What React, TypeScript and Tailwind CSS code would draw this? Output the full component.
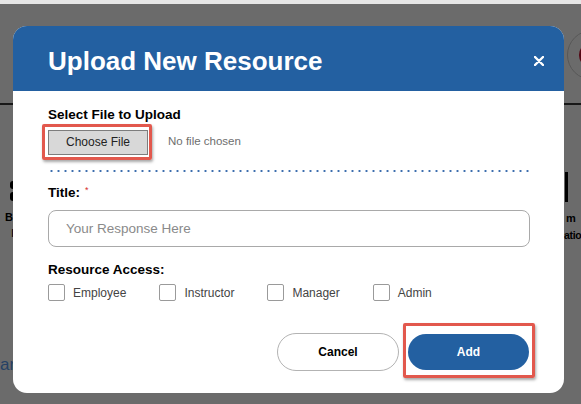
import React, { useState } from 'react';

const roles = ['Employee', 'Instructor', 'Manager', 'Admin'];

function Highlight({ className }: { className: string }) {
  // red annotation frame drawn over a control
  return (
    <span
      className={`pointer-events-none absolute rounded-[2px] border-[3px] border-[#e2584d] shadow-[1px_2px_3px_rgba(0,0,0,0.35)] ${className}`}
    />
  );
}

function BackgroundPage() {
  // only the slivers of the page that show round the modal
  return (
    <>
      <div className="flex h-[101px] justify-end border-b-2 border-[#3b3b3b] pt-[26px]">
        <div className="mr-[-36px] flex h-[50px] w-[50px] items-center justify-center rounded-full border border-[#cfcfcf] bg-white">
          <span className="h-[26px] w-[26px] rounded-full bg-[#c8102e]" />
        </div>
      </div>
      <div className="flex justify-between">
        <div className="flex w-[13px] flex-col">
          <svg className="ml-[10px] mt-[76px] shrink-0" width="3" height="20" viewBox="0 0 3 20">
            <rect x="0" y="0" width="6" height="8" rx="3" fill="#000" />
            <rect x="0" y="11" width="6" height="9" rx="3" fill="#000" />
          </svg>
          <span className="ml-[5px] mt-[9px] text-[11px] leading-[14px] font-bold text-black">B</span>
          <span className="ml-[11px] mt-[2px] text-[11px] leading-[14px] text-black">I</span>
          <span className="mt-[114px] text-[17px] leading-[22px] text-[#5b9bf0]">ar</span>
        </div>
        <div className="flex w-[17px] flex-col">
          <div className="ml-[1px] mt-[67px] h-[30px] w-[3px] shrink-0 bg-black" />
          <span className="ml-[2px] mt-[9px] text-[11px] leading-[14px] font-bold text-black">m</span>
          <span className="mt-[3px] text-[10.5px] leading-[14px] font-bold tracking-[-0.3px] text-black">atio</span>
        </div>
      </div>
    </>
  );
}

export default function App() {
  const [access, setAccess] = useState<string[]>([]);
  const [title, setTitle] = useState('');

  const toggle = (role: string) =>
    setAccess(prev => (prev.includes(role) ? prev.filter(r => r !== role) : [...prev, role]));

  return (
    <div className="h-[404px] w-[581px] overflow-hidden bg-white font-['Liberation_Sans',Arial,sans-serif]">
      <div className="h-[4px] bg-[#e6e6e6]" />
      <div className="relative h-[400px] bg-white">
        <BackgroundPage />

        <div className="absolute inset-0 flex items-start bg-black/[0.58] pl-[13px] pt-[22px]">
          <div className="w-[551px] overflow-hidden rounded-[14px] bg-white">
            <div className="flex h-[65px] items-center justify-between bg-[#2360a1] pl-[35px] pr-[20px] pt-[5px]">
              <h1 className="text-[26px] leading-[30px] font-bold text-white">Upload New Resource</h1>
              <button aria-label="Close" className="flex h-[10px] w-[10px] items-center justify-center">
                <svg width="10" height="10" viewBox="0 0 10 10">
                  <path d="M1 1 L9 9 M9 1 L1 9" stroke="#fff" strokeWidth="2.4" strokeLinecap="round" />
                </svg>
              </button>
            </div>

            <div className="flex flex-col pb-[22px] pl-[35px] pr-[34px] pt-[16px]">
              <label className="text-[13.5px] leading-[16px] font-bold text-black">Select File to Upload</label>
              <div className="mt-[6px] flex items-center">
                <div className="relative">
                  <button className="h-[25px] w-[100px] border border-[#7d7d7d] bg-[#d8d8d8] text-[12px] text-[#222]">
                    Choose File
                  </button>
                  <Highlight className="-bottom-[5px] -left-[6px] -right-[4px] -top-[5px]" />
                </div>
                <span className="ml-[20px] text-[11.5px] text-[#6e6e6e]">No file chosen</span>
              </div>

              <div className="mt-[15px] h-[2px] bg-[radial-gradient(circle,#3d6eae_0.9px,transparent_1.3px)] bg-[length:7px_2px]" />

              <label className="mt-[13px] flex items-start text-[13.5px] leading-[16px] font-bold text-black">
                Title:
                <span className="ml-[5px] text-[9px] leading-[11px] font-normal text-[#d62d2d]">*</span>
              </label>
              <input
                value={title}
                onChange={e => setTitle(e.target.value)}
                placeholder="Your Response Here"
                className="mt-[9px] h-[37px] rounded-[8px] border border-[#a9a9a9] pl-[17px] text-[13.5px] text-[#333] outline-none placeholder:text-[#8a8a8a]"
              />

              <span className="mt-[15px] text-[13.5px] leading-[16px] font-bold text-black">Resource Access:</span>
              <div className="mt-[6px] flex items-center gap-[33px]">
                {roles.map(role => (
                  <label key={role} className="flex cursor-pointer items-center gap-[8px]">
                    <span
                      onClick={() => toggle(role)}
                      className="flex h-[17px] w-[17px] items-center justify-center rounded-[2px] border border-[#9a9a9a] bg-white text-[11px] text-[#2360a1]"
                    >
                      {access.includes(role) ? '✓' : ''}
                    </span>
                    <span className="text-[12px] text-[#444]">{role}</span>
                  </label>
                ))}
              </div>

              <div className="mt-[31px] flex items-center justify-end gap-[9px] pr-[1px]">
                <button className="h-[38px] w-[122px] rounded-full border border-[#b3b3b3] bg-white text-[12px] font-bold text-black">
                  Cancel
                </button>
                <div className="relative">
                  <button className="h-[36px] w-[121px] rounded-full bg-[#2360a1] text-[12px] font-bold text-white">
                    Add
                  </button>
                  <Highlight className="-bottom-[8px] -left-[5px] -right-[6px] -top-[11px]" />
                </div>
              </div>
            </div>
          </div>
        </div>
      </div>
    </div>
  );
}
